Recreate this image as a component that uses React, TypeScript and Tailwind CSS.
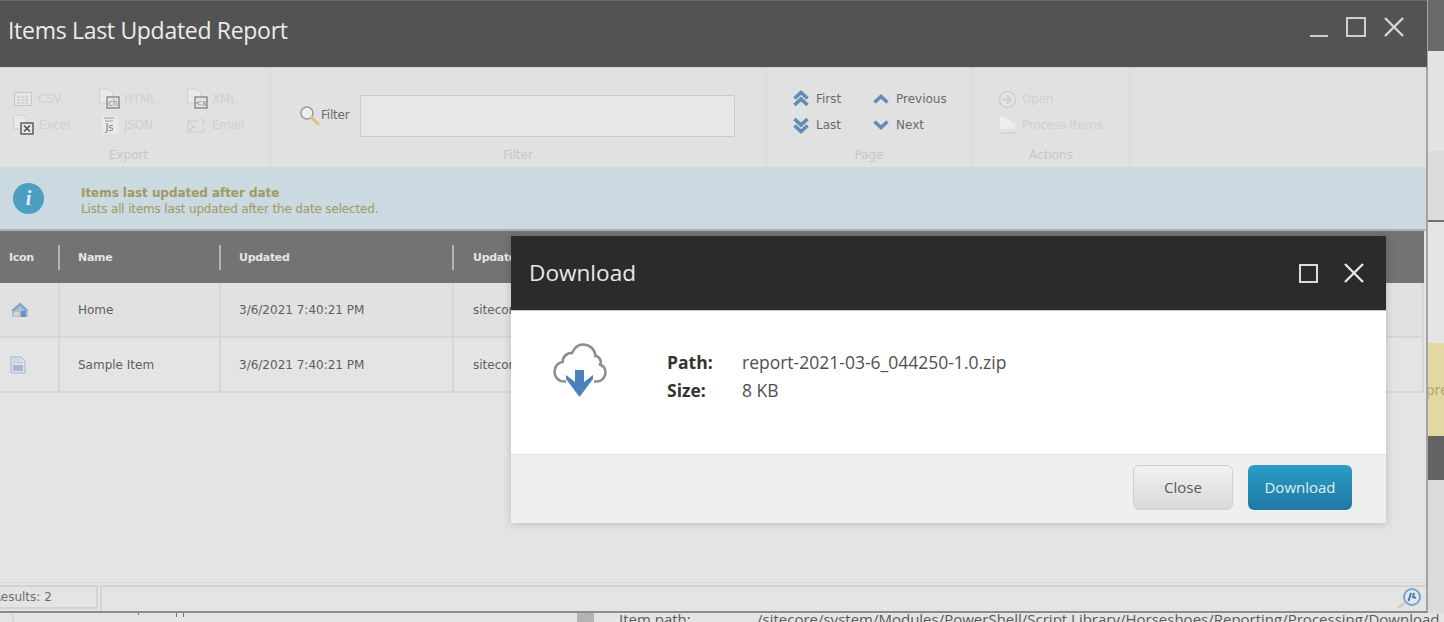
import type { ReactNode } from "react";

const verdana = "font-['DejaVu_Sans',sans-serif]";
const openSans = "font-['Open_Sans',sans-serif]";

const Page = () => (
  <path d="M0.500 1h9.500l4 4v10H0.500z" fill="#e9e9e9" stroke="#cfcfcf" strokeWidth="1" />
);

function FileBadge({ text }: { text: string }) {
  return (
    <svg width="22" height="22" viewBox="0 0 22 22">
      <Page />
      <rect x="8" y="9" width="12" height="11" fill="#e4e4e4" stroke="#8d8d8d" strokeWidth="1.500" />
      <text x="14" y="17.500" fontSize="8" textAnchor="middle" fill="#8a8a8a" fontFamily="DejaVu Sans">{text}</text>
    </svg>
  );
}

function CsvIcon() {
  return (
    <svg width="18" height="16" viewBox="0 0 18 16">
      <rect x="0.500" y="1.500" width="17" height="13" fill="#e6e6e6" stroke="#c6c6c6" />
      <path d="M3 6h12M3 9h12M3 12h12" stroke="#c2c2c2" strokeDasharray="3 1" />
    </svg>
  );
}

function ExcelIcon() {
  return (
    <svg width="22" height="22" viewBox="0 0 22 22" className="-ml-px">
      <Page />
      <rect x="8" y="9" width="12" height="11" fill="#e8e8e8" stroke="#5d5d5d" strokeWidth="1.500" />
      <path d="M11 11.500l6 6M17 11.500l-6 6" stroke="#4f4f4f" strokeWidth="1.600" />
    </svg>
  );
}

function JsonIcon() {
  return (
    <svg width="18" height="20" viewBox="0 0 18 20" className="ml-[2px]">
      <rect x="1" y="1" width="16" height="18" rx="2" fill="#e9e9e9" />
      <path d="M3 3h10M4 6h8" stroke="#9a9a9a" />
      <text x="8.500" y="16" fontSize="10" textAnchor="middle" fill="#7d7d7d" fontFamily="DejaVu Sans">Js</text>
    </svg>
  );
}

function MailIcon() {
  return (
    <svg width="20" height="18" viewBox="0 0 20 18">
      <path d="M1 5h10M1 5v11h16v-4M1 5l7 7M1 16l5-5" fill="none" stroke="#cdcdcd" strokeWidth="1.200" />
      <path d="M14 2a3 3 0 0 1 2 5v3" fill="none" stroke="#cdcdcd" strokeWidth="1.200" />
    </svg>
  );
}

function Chevrons({ dir, double }: { dir: "up" | "down"; double?: boolean }) {
  return (
    <svg width="16" height="18" viewBox="0 0 16 18" className={dir === "down" ? "rotate-180" : ""}>
      {double ? (
        <>
          <path d="M1.500 8.500 8 2.500 14.500 8.500" fill="none" stroke="#5f8dbb" strokeWidth="3.600" />
          <path d="M1.500 15 8 9 14.500 15" fill="none" stroke="#5f8dbb" strokeWidth="3.600" />
        </>
      ) : (
        <path d="M1.500 12.500 8 6.500 14.500 12.500" fill="none" stroke="#5f8dbb" strokeWidth="3.600" />
      )}
    </svg>
  );
}

function ToolItem({ icon, label, muted, iconBox = "w-[23px]" }: { icon: ReactNode; label: string; muted?: boolean; iconBox?: string }) {
  return (
    <div className="flex items-center h-[26px]">
      <div className={`${iconBox} flex justify-start items-center shrink-0`}>{icon}</div>
      <span className={`text-[12px] whitespace-nowrap ${muted ? "text-[#cfcfcf] tracking-[-0.2px]" : "text-[#6a6a6a]"}`}>{label}</span>
    </div>
  );
}

function RibbonGroup({ label, width, labelPad = "", children }: { label: string; width: string; labelPad?: string; children: ReactNode }) {
  return (
    <div className={`${width} shrink-0 h-full flex flex-col border-r-2 border-[#dcdcdc]`}>
      <div className="flex-1 min-h-0">{children}</div>
      <div className={`h-[24px] text-center text-[12px] leading-[24px] text-[#c6c6c6] ${labelPad}`}>{label}</div>
    </div>
  );
}

function Ribbon() {
  return (
    <div className={`h-[100px] bg-[#e1e1e1] border-t border-[#d4d4d4] flex text-[12px] ${verdana}`}>
      <RibbonGroup label="Export" width="w-[271px]" labelPad="pr-[12px]">
        <div className="grid grid-cols-[85px_88px_80px] pl-[14px] pt-[18px]">
          <ToolItem icon={<CsvIcon />} label="CSV" muted iconBox="w-[24px]" />
          <ToolItem icon={<FileBadge text="ch" />} label="HTML" muted iconBox="w-[25px]" />
          <ToolItem icon={<FileBadge text="<x" />} label="XML" muted iconBox="w-[25px]" />
          <ToolItem icon={<ExcelIcon />} label="Excel" muted iconBox="w-[25px]" />
          <ToolItem icon={<JsonIcon />} label="JSON" muted iconBox="w-[25px]" />
          <ToolItem icon={<MailIcon />} label="Email" muted iconBox="w-[25px]" />
        </div>
      </RibbonGroup>
      <RibbonGroup label="Filter" width="w-[496px]">
        <div className="flex items-center pl-[28px] pt-[27px]">
          <svg width="21" height="21" viewBox="0 0 21 21" className="shrink-0 mb-[1px]">
            <circle cx="8" cy="8" r="6" fill="#eef0f0" stroke="#9b9b9b" strokeWidth="1.600" />
            <path d="M12.500 12.500 19 19" stroke="#e3bf78" strokeWidth="3" strokeLinecap="round" />
          </svg>
          <span className="ml-[1px] mb-[2px] text-[#6a6a6a] tracking-[-0.2px]">Filter</span>
          <div className="ml-[10px] w-[375px] h-[42px] bg-[#e7e7e7] border border-[#cbcbcb] rounded-[2px]" />
        </div>
      </RibbonGroup>
      <RibbonGroup label="Page" width="w-[206px]">
        <div className="grid grid-cols-[80px_90px] pl-[26px] pt-[18px]">
          <ToolItem icon={<Chevrons dir="up" double />} label="First" />
          <ToolItem icon={<Chevrons dir="up" />} label="Previous" />
          <ToolItem icon={<Chevrons dir="down" double />} label="Last" />
          <ToolItem icon={<Chevrons dir="down" />} label="Next" />
        </div>
      </RibbonGroup>
      <RibbonGroup label="Actions" width="w-[158px]">
        <div className="pl-[25px] pt-[18px]">
          <ToolItem
            icon={
              <svg width="19" height="19" viewBox="0 0 19 19">
                <circle cx="9.500" cy="9.500" r="8" fill="#e4e4e4" stroke="#cfcfcf" strokeWidth="1.600" />
                <path d="M4.500 9.500h8M9 5.500l4 4-4 4" fill="none" stroke="#cfcfcf" strokeWidth="2" />
              </svg>
            }
            label="Open"
            muted
            iconBox="w-[24px]"
          />
          <ToolItem
            icon={
              <svg width="20" height="20" viewBox="0 0 20 20">
                <path d="M2 2h5l3 3h2l2 3h3v6H2z" fill="#ededed" />
                <path d="M3 18h14" stroke="#d0d0d0" strokeWidth="2" strokeDasharray="2 1" />
              </svg>
            }
            label="Process Items"
            muted
            iconBox="w-[24px]"
          />
        </div>
      </RibbonGroup>
    </div>
  );
}

function HomeIcon() {
  return (
    <svg width="20" height="18" viewBox="0 0 20 18">
      <path d="M2 9 10 2l8 7v7H2z" fill="#b9bcc2" />
      <path d="M1 9.500 10 1.500l8.500 8-3 .5L10 5l-5.500 5z" fill="#7aa9d6" />
      <rect x="11" y="10" width="5" height="6" fill="#5f96c9" />
      <rect x="4" y="11" width="5" height="4" fill="#d2d5da" />
    </svg>
  );
}

function DocIcon() {
  return (
    <svg width="16" height="18" viewBox="0 0 16 18">
      <path d="M1 1h10l4 4v12H1z" fill="#dde2ec" stroke="#a8b2c8" />
      <rect x="3" y="9" width="10" height="6" fill="#aab5cc" />
      <path d="M3 4h7M3 6.500h10" stroke="#b8c0d2" />
    </svg>
  );
}

const rows = [
  { icon: <HomeIcon />, name: "Home", shade: "bg-[#e1e1e1]" },
  { icon: <DocIcon />, name: "Sample Item", shade: "bg-[#e4e4e4]" },
];

function ReportTable() {
  return (
    <div className={`mr-[2px] text-[12px] ${verdana}`}>
      <div className="h-[52px] pt-[1px] bg-[#737373] grid grid-cols-[60px_161px_233px_1fr] items-center font-bold text-[#e4e4e4] text-[11px] tracking-[-0.3px]">
        <div className="h-[25px] leading-[25px] pl-[9px] border-r-2 border-[#b3b3b3]">Icon</div>
        <div className="h-[25px] leading-[25px] pl-[18px] border-r-2 border-[#b3b3b3]">Name</div>
        <div className="h-[25px] leading-[25px] pl-[18px] border-r-2 border-[#b3b3b3]">Updated</div>
        <div className="h-[25px] leading-[25px] pl-[19px]">Updated by</div>
      </div>
      {rows.map((r) => (
        <div key={r.name} className={`h-[55px] ${r.shade} grid grid-cols-[60px_161px_233px_1fr] items-stretch border-b-2 border-r-2 border-[#d6d6d6] text-[#5f5f5f]`}>
          <div className="flex items-center pl-[10px] border-r-2 border-[#d6d6d6]">{r.icon}</div>
          <div className="flex items-center pl-[18px] border-r-2 border-[#d6d6d6]">{r.name}</div>
          <div className="flex items-center pl-[18px] border-r-2 border-[#d6d6d6]">3/6/2021 7:40:21 PM</div>
          <div className="flex items-center pl-[19px]">sitecore\admin</div>
        </div>
      ))}
    </div>
  );
}

function DownloadDialog() {
  return (
    <div className={`absolute left-[511px] top-[236px] w-[875px] h-[287px] flex flex-col shadow-[0_1px_8px_rgba(0,0,0,0.18)] ${openSans}`}>
      <div className="h-[75px] bg-[#2b2b2b] border-b border-[#c8c8c8] flex items-center pl-[18px] pr-[22px]">
        <span className="text-[22.600px] text-[#e9e9e9]">Download</span>
        <div className="ml-auto flex items-center gap-[26px]">
          <div className="w-[19px] h-[19px] border-2 border-[#dcdcdc]" />
          <svg width="20" height="20" viewBox="0 0 20 20">
            <path d="M1 1l18 18M19 1 1 19" stroke="#e6e6e6" strokeWidth="2.400" />
          </svg>
        </div>
      </div>
      <div className="h-[143px] bg-white flex items-start text-[17.500px] text-[#4f4f4f]">
        <svg width="54" height="56" viewBox="0 0 54 56" className="ml-[42px] mt-[32px] shrink-0">
          <path
            d="M13 38.500H11C5 38.500 1.500 33.500 1.500 28.500 1.500 23 5.500 19.500 9.500 19 10 12.500 15 9.500 19 10 21.500 4.500 26 1.500 30 1.500c7 0 12 5 12.500 11.500C44 12.500 50 17 47 21.500 50.500 23 52.500 26 52.500 29.500 52.500 34.500 48.500 38.500 44 38.500H41"
            fill="none"
            stroke="#8e8e8e"
            strokeWidth="2.600"
          />
          <path d="M22 27h9v12l9-7v4L26.500 54 13 36v-4l9 7z" fill="#4a82bb" />
        </svg>
        <div className="ml-[60px] mt-[37px] grid grid-cols-[75px_1fr] leading-[28px]">
          <span className="font-bold text-[#333333]">Path:</span>
          <span>report-2021-03-6_044250-1.0.zip</span>
          <span className="font-bold text-[#333333]">Size:</span>
          <span>8 KB</span>
        </div>
      </div>
      <div className="flex-1 bg-[#efefef] border-t border-[#e3e3e3] flex items-start justify-end gap-[15px] pt-[10px] pr-[34px] text-[15px]">
        <button className="w-[100px] h-[45px] rounded-[6px] border border-[#cfcfcf] bg-gradient-to-b from-[#f2f2f2] to-[#d9d9d9] text-[#5a5a5a]">Close</button>
        <button className="w-[104px] h-[45px] rounded-[6px] bg-gradient-to-b from-[#2b9cc9] to-[#1f7aa2] text-[#dff0f7]">Download</button>
      </div>
    </div>
  );
}

function StatusBar() {
  return (
    <div className={`mt-auto h-[29px] border-t border-[#d9d9d9] flex items-stretch gap-[2px] pt-[2px] ${verdana}`}>
      <div className="w-[98px] h-[24px] border-2 border-[#d2d2d2] border-l-0 overflow-hidden whitespace-nowrap text-[12px] leading-[20px] text-[#6e6e6e]">
        <span className="block -ml-[7px]">Results: 2</span>
      </div>
      <div className="flex-1 border-2 border-b-0 border-r-0 border-[#d2d2d2] flex justify-end items-center pr-[4px]">
        <svg width="26" height="22" viewBox="0 0 26 22">
          <path d="M10 14 2 20" stroke="#cfcfcf" strokeWidth="3" />
          <circle cx="16" cy="9" r="8" fill="#dfe8f0" stroke="#7fa3c6" strokeWidth="2" />
          <path d="M12.500 13 15 5M18 5l-1 4 3 1" fill="none" stroke="#4a7bab" strokeWidth="2" />
        </svg>
      </div>
    </div>
  );
}

function SideStrip() {
  return (
    <div className={`flex-1 flex flex-col overflow-hidden ${openSans}`}>
      <div className="h-[51px] bg-[#6a6a6a]" />
      <div className="h-[100px] bg-[#e3e3e3]" />
      <div className="h-[71px] bg-[#dcdcdc] border-b-2 border-[#6f6f6f]" />
      <div className="h-[121px] bg-[#e5e5e5]" />
      <div className="h-[93px] bg-[#e3d8a2] flex items-center text-[14px] text-[#a9a274] whitespace-nowrap">
        <span className="-ml-[2px]">pre</span>
      </div>
      <div className="h-[44px] bg-[#636363]" />
      <div className="flex-1 bg-[#dcdcdc]" />
    </div>
  );
}

export default function App() {
  return (
    <div className="relative w-[1444px] h-[622px] overflow-hidden bg-[#e4e4e4] flex flex-col">
      <div className="h-[613px] flex shrink-0">
        <div className="w-[1428px] shrink-0 flex flex-col border-r-2 border-b-2 border-r-[#a4a4a4] border-b-[#8c8c8c] bg-[#e4e4e4]">
          <div className={`h-[67px] -mr-[1px] bg-[#535353] border-t border-[#6a6a6a] flex items-center pl-[8px] pr-[23px] ${openSans}`}>
            <span className="mb-[8px] text-[23px] tracking-[-0.3px] text-[#ececec]">Items Last Updated Report</span>
            <div className="ml-auto mb-[14px] flex items-center gap-[18px]">
              <div className="w-[18px] h-[2px] bg-[#cfcfcf] mt-[18px]" />
              <div className="w-[20px] h-[20px] border-2 border-[#cfcfcf]" />
              <svg width="20" height="20" viewBox="0 0 20 20">
                <path d="M1 1l18 18M19 1 1 19" stroke="#d6d6d6" strokeWidth="2.400" />
              </svg>
            </div>
          </div>
          <Ribbon />
          <div className={`h-[64px] bg-[#cbd9e1] border-b-2 border-[#a9b3b9] flex items-center ${verdana}`}>
            <div className="ml-[13px] w-[31px] h-[31px] rounded-full bg-[#4d9fc1] flex items-center justify-center font-['Liberation_Serif',serif] italic font-bold text-[20px] text-[#e2eef3]">i</div>
            <div className="ml-[37px] pt-[6px] text-[12px] leading-[16px] text-[#a09a62] tracking-[-0.17px]">
              <div className="font-bold tracking-[-0.05px]">Items last updated after date</div>
              <div>Lists all items last updated after the date selected.</div>
            </div>
          </div>
          <ReportTable />
          <StatusBar />
        </div>
        <SideStrip />
      </div>
      <div className={`flex-1 flex items-start text-[15px] leading-[16px] whitespace-nowrap text-[#5a5a5a] ${openSans}`}>
        <div className="w-[14px] h-full border-r-2 border-[#d8d8d8]" />
        <div className="ml-[124px] w-[1px] h-[2px] bg-[#777777]" />
        <div className="ml-[37px] w-[1px] h-[4px] bg-[#777777]" />
        <div className="ml-[6px] w-[1px] h-[4px] bg-[#777777]" />
        <div className="ml-[393px] w-[17px] h-full bg-[#b3b3b3]" />
        <span className="ml-[25px] -mt-[2px] w-[138px]">Item path:</span>
        <span className="-mt-[2px]">/sitecore/system/Modules/PowerShell/Script Library/Horseshoes/Reporting/Processing/Download</span>
      </div>
      <DownloadDialog />
    </div>
  );
}
